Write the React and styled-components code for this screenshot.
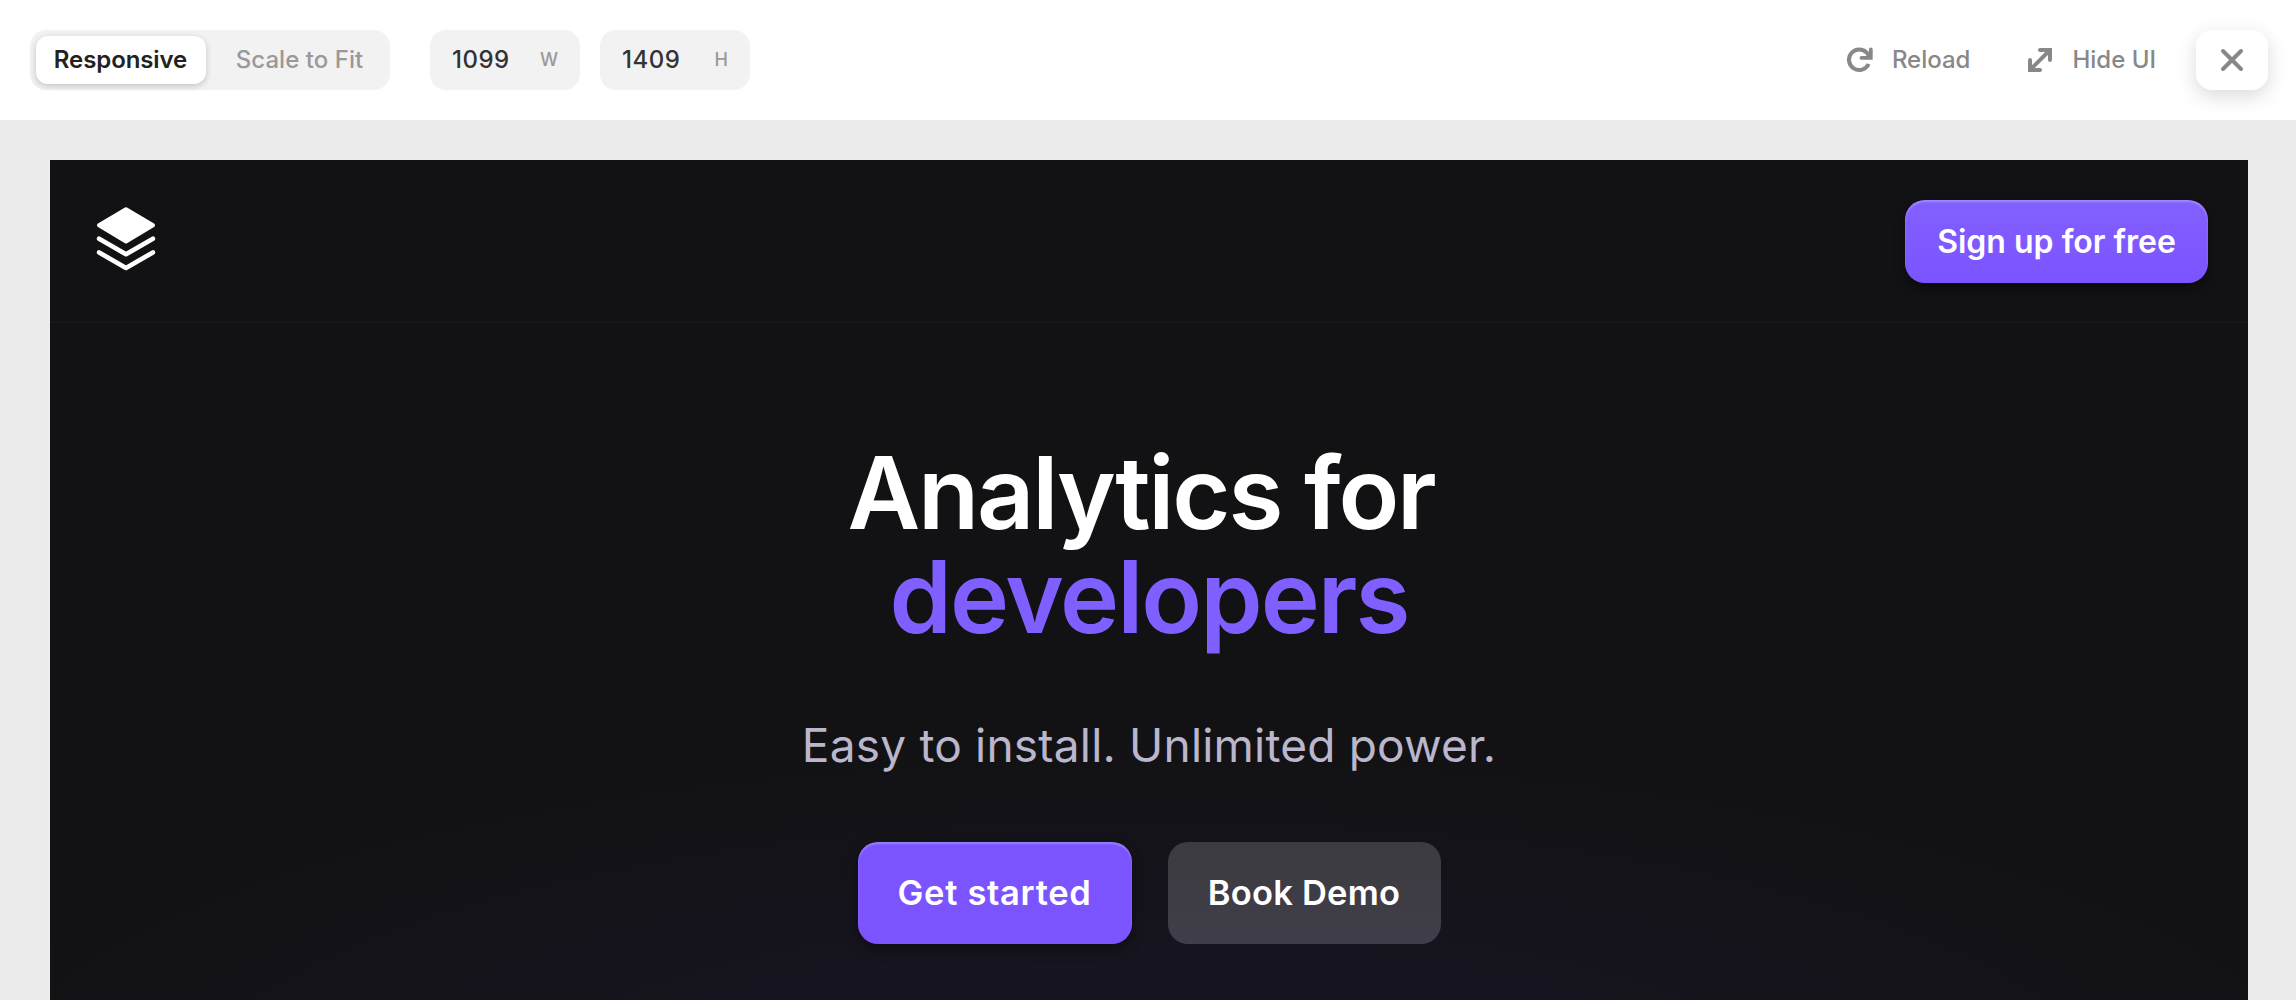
import React, { useState } from 'react';
import styled, { createGlobalStyle } from 'styled-components';

const LogoIcon = () => (
    <svg width="60" height="66" viewBox="0 0 60 66" fill="none" stroke="#fff" strokeLinecap="round" strokeLinejoin="round">
        <path d="M30 3.2L57 19.3L30 35.6L3 19.3Z" fill="#fff" strokeWidth="4" />
        <path d="M3.1 32.7L30 48.3L56.9 32.7" strokeWidth="4.6" />
        <path d="M3.1 46.4L30 62L56.9 46.4" strokeWidth="4.6" />
    </svg>
);

const ReloadIcon = () => (
    <svg width="28" height="28" viewBox="0 0 28 28" fill="none" stroke="currentColor" strokeWidth="4">
        <path d="M22.6 18A10.3 10.3 0 1 1 21 6.9L23.5 10.5" />
        <path d="M24.8 3.4V11.9H15.5" strokeWidth="3.8" strokeLinecap="round" />
    </svg>
);

const ExpandIcon = () => (
    <svg width="28" height="28" viewBox="0 0 28 28" fill="none" stroke="currentColor" strokeWidth="4" strokeLinecap="round">
        <path d="M4 24L24 4" />
        <path d="M14 4H24V14" />
        <path d="M4 14V24H14" />
    </svg>
);

const CloseIcon = () => (
    <svg width="28" height="28" viewBox="0 0 28 28" fill="none" stroke="currentColor" strokeWidth="4" strokeLinecap="round">
        <path d="M5 5L23 23M23 5L5 23" />
    </svg>
);

const App = () => {
    const [mode, setMode] = useState('responsive');

    return (
        <>
            <GlobalStyle />
            <Toolbar>
                <ToolGroup>
                    <Segmented>
                        <Segment active={mode === 'responsive'} onClick={() => setMode('responsive')}>Responsive</Segment>
                        <Segment active={mode === 'fit'} onClick={() => setMode('fit')}>Scale to Fit</Segment>
                    </Segmented>
                    <SizeField>1099 <Unit>W</Unit></SizeField>
                    <SizeField>1409 <Unit>H</Unit></SizeField>
                </ToolGroup>
                <ActionGroup>
                    <Action><ReloadIcon /><ActionLabel>Reload</ActionLabel></Action>
                    <Action><ExpandIcon /><ActionLabel>Hide UI</ActionLabel></Action>
                    <CloseButton><CloseIcon /></CloseButton>
                </ActionGroup>
            </Toolbar>
            <Canvas>
                <Page>
                    <Header>
                        <Logo><LogoIcon /></Logo>
                        <SignUpButton>Sign up for free</SignUpButton>
                    </Header>
                    <Hero>
                        <Title>
                            <TitleLine>Analytics for</TitleLine>
                            <TitleAccent>developers</TitleAccent>
                        </Title>
                        <Subtitle>Easy to install. Unlimited power.</Subtitle>
                        <Buttons>
                            <PrimaryButton>Get started</PrimaryButton>
                            <SecondaryButton>Book Demo</SecondaryButton>
                        </Buttons>
                    </Hero>
                </Page>
            </Canvas>
        </>
    );
}

const GlobalStyle = createGlobalStyle`
    * {
        box-sizing: border-box;
    }
    body {
        margin: 0;
        overflow: hidden;
        background: #ececec;
        font-family: Inter, sans-serif;
    }
    button {
        border: 0;
        padding: 0;
        background: none;
        font-family: inherit;
        cursor: pointer;
    }
    svg {
        display: block;
        flex: none;
    }
`

const Toolbar = styled.div`
    height: 120px;
    padding: 0 28px 0 30px;
    display: flex;
    justify-content: space-between;
    align-items: center;
    background: #fff;
`

const ToolGroup = styled.div`
    display: flex;
    gap: 20px;
`

const Segmented = styled.div`
    width: 360px;
    height: 60px;
    margin-right: 20px;
    padding: 6px;
    display: flex;
    justify-content: space-between;
    border-radius: 16px;
    background: #f2f2f2;
`

const Segment = styled.button.withConfig({ shouldForwardProp: p => p !== 'active' })`
    height: 48px;
    width: 170px;
    padding: 0 1px 2px 0;
    border-radius: 12px;
    font-size: 24px;
    font-weight: ${p => p.active ? 600 : 450};
    letter-spacing: ${p => p.active ? '-0.1px' : '0.05px'};
    color: ${p => p.active ? '#222' : '#999'};
    background: ${p => p.active ? '#fff' : 'transparent'};
    box-shadow: ${p => p.active ? '0 2px 6px rgba(0, 0, 0, 0.2)' : 'none'};
    &:last-child {
        padding: 0 0 2px 1px;
    }
`

const SizeField = styled.div`
    width: 150px;
    height: 60px;
    padding: 0 22px 2px;
    display: flex;
    justify-content: space-between;
    align-items: center;
    border-radius: 16px;
    background: #f2f2f2;
    font-size: 24px;
    font-weight: 450;
    letter-spacing: 0.5px;
    color: #333;
`

const Unit = styled.span`
    font-size: 18px;
    font-weight: 500;
    letter-spacing: 0;
    color: #999;
`

const ActionGroup = styled.div`
    display: flex;
    align-items: center;
    color: #888;
`

const Action = styled.button`
    margin-right: 56px;
    display: flex;
    align-items: center;
    gap: 18px;
    font-size: 24px;
    font-weight: 550;
    color: inherit;
    &:nth-child(2) {
        margin-right: 40px;
    }
`

const ActionLabel = styled.span`
    padding-bottom: 2px;
`

const CloseButton = styled.button`
    width: 72px;
    height: 60px;
    display: flex;
    justify-content: center;
    align-items: center;
    border-radius: 16px;
    background: #fff;
    color: #888;
    box-shadow: 0 6px 20px rgba(0, 0, 0, 0.15);
`

const Canvas = styled.div`
    height: 880px;
    padding: 40px 48px 0 50px;
`

const Page = styled.div`
    height: 840px;
    background: radial-gradient(ellipse 1300px 400px at 50% 115%, #191627, #121214);
`

const Header = styled.div`
    height: 163px;
    padding: 40px 40px 0 46px;
    display: flex;
    justify-content: space-between;
    align-items: flex-start;
    border-bottom: 2px solid #17171a;
`

const Logo = styled.div`
    padding-top: 6px;
`

const PrimaryButton = styled.button`
    width: 274px;
    height: 102px;
    padding-bottom: 1px;
    border-radius: 20px;
    font-size: 34.5px;
    font-weight: 600;
    letter-spacing: 0.7px;
    color: #fff;
    background: #7c54ff;
    box-shadow: inset 0 2px 2px rgba(255, 255, 255, 0.25), 0 6px 12px rgba(0, 0, 0, 0.35);
`

const SignUpButton = styled(PrimaryButton)`
    width: 303px;
    height: 83px;
    font-size: 32px;
    letter-spacing: 0;
    background: linear-gradient(#8360ff, #7a54ff);
`

const SecondaryButton = styled(PrimaryButton)`
    width: 273px;
    background: linear-gradient(#3c3b40, #403e49);
    letter-spacing: 0.2px;
    box-shadow: none;
`

const Hero = styled.div`
    padding-top: 118px;
    display: flex;
    flex-direction: column;
    align-items: center;
`

const Title = styled.h1`
    margin: 0;
    font-size: 100px;
    font-weight: 610;
    line-height: 104px;
    letter-spacing: -2px;
    text-align: center;
    color: #fff;
`

const TitleLine = styled.span`
    display: block;
    padding-right: 16px;
    letter-spacing: -2.2px;
`

const TitleAccent = styled.span`
    display: block;
    color: #7f5fff;
`

const Subtitle = styled.p`
    margin: 68px 0 69px;
    font-size: 46px;
    line-height: 56px;
    letter-spacing: 0.2px;
    color: #bab6cc;
`

const Buttons = styled.div`
    display: flex;
    gap: 36px;
`

export default App;
